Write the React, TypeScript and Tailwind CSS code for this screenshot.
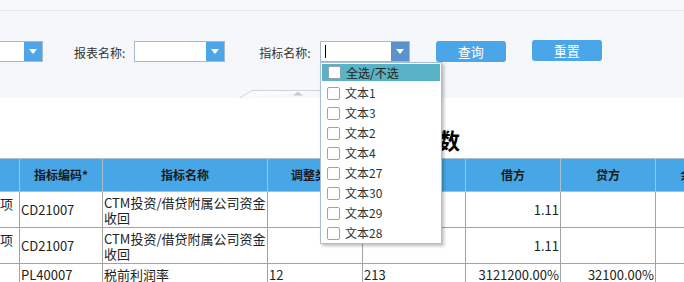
const font = { fontFamily: '"Noto Sans CJK SC", "Noto Sans", sans-serif' }

interface SelectProps {
    className?: string
    active?: boolean
    cursor?: boolean
}

const Select = ({ className, active, cursor }: SelectProps) => {
    return (
        <div className={`flex h-[21px] border border-[#a9b9ca] bg-white ${className}`}>
            <div className="flex-1 flex items-center pl-[4px]">
                {cursor && <span className="w-px h-[13px] bg-black" />}
            </div>
            <div className={`w-[18px] h-full flex items-center justify-center ${active ? 'bg-[#5a93cc]' : 'bg-[#4ea6e6]'}`}>
                <svg width="8" height="5" viewBox="0 0 8 5"><path d="M0 0h8L4 5z" fill="#fff" /></svg>
            </div>
        </div>
    )
}

const items = ['文本1', '文本3', '文本2', '文本4', '文本27', '文本30', '文本29', '文本28']

const Check = () => <span className="w-[13px] h-[13px] border border-[#9aa3ad] rounded-[2px] bg-white shrink-0" />

const Dropdown = () => {
    return (
        <div className="absolute left-[320px] top-[62px] w-[122px] h-[182px] bg-white border border-[#a7c0d8] shadow-[2px_2px_3px_rgba(0,0,0,0.25)] pt-px">
            <div className="h-[17px] mx-px bg-[#5ab2c6] flex items-center gap-[5px] pl-[6px] text-[12px] text-[#222] mb-[2px]">
                <Check />
                <span>全选/不选</span>
            </div>
            {items.map((t) => (
                <div key={t} className="h-[20px] flex items-center gap-[5px] pl-[6px] text-[12px] text-[#333]">
                    <Check />
                    <span>{t}</span>
                </div>
            ))}
        </div>
    )
}

const cols = [73, 83, 165, 95, 103, 95, 95, 74]
const headers = ['', '指标编码*', '指标名称', '调整类型', '', '借方', '贷方', '余额']

const rows = [
    ['收支调整项目', 'CD21007', 'CTM投资/借贷附属公司资金收回', '', '', '1.11', '', ''],
    ['收支调整项目', 'CD21007', 'CTM投资/借贷附属公司资金收回', '', '', '1.11', '', ''],
    ['', 'PL40007', '税前利润率', '12', '213', '3121200.00%', '32100.00%', ''],
]

const DataTable = () => {
    return (
        <table className="table-fixed border-collapse ml-[-54px] text-[13px] text-[#222]" style={{ width: 783 }}>
            <colgroup>
                {cols.map((w, i) => <col key={i} style={{ width: w }} />)}
            </colgroup>
            <thead>
                <tr className="h-[33px] bg-[#46a6e6]">
                    {headers.map((h, i) => (
                        <th key={i} className="border border-[#a9bfd2] text-[12px] font-bold text-[#1a1a1a] text-center whitespace-nowrap">{h}</th>
                    ))}
                </tr>
            </thead>
            <tbody>
                {rows.map((r, ri) => (
                    <tr key={ri} className={ri < 2 ? 'h-[36px]' : 'h-[20px]'}>
                        {r.map((c, ci) => (
                            <td key={ci} className={`border border-[#a3a3a3] px-[1px] leading-[15px] overflow-hidden ${ci >= 5 && ci <= 6 ? 'text-right' : 'text-left'} ${ri === 2 ? 'align-top pt-[3px]' : ci === 0 ? 'align-top pt-[4px]' : 'align-middle'}`}>
                                {c}
                            </td>
                        ))}
                    </tr>
                ))}
            </tbody>
        </table>
    )
}

export default function App() {
    return (
        <div className="w-[684px] h-[282px] overflow-hidden relative bg-white" style={font}>
            <div className="h-[11px] bg-[#f7f8fa] border-b border-[#e3e6ea]" />
            <div className="h-[87px] bg-[#f5f7fa] relative">
                <div className="flex items-start pt-[30px] text-[12px] text-[#333]">
                    <Select className="w-[93px] ml-[-50px]" />
                    <span className="ml-[31px] mt-[3px]">报表名称:</span>
                    <Select className="w-[91px] ml-[9px]" />
                    <span className="ml-[34px] mt-[3px]">指标名称:</span>
                    <Select className="w-[90px] ml-[9px]" active cursor />
                    <button className="ml-[26px] w-[70px] h-[21px] rounded-[3px] bg-[#4aa6e8] text-white text-[13px]">查询</button>
                    <button className="ml-[26px] mt-[-1px] w-[70px] h-[21px] rounded-[3px] bg-[#4aa6e8] text-white text-[13px]">重置</button>
                </div>
                <svg className="absolute left-[239px] bottom-0" width="84" height="9" viewBox="0 0 84 9">
                    <path d="M0.5 9L13.5 1.5H84" fill="#fafbfc" stroke="#cfd4da" />
                    <path d="M54 6.5h10l-5-4z" fill="#c6cbd1" />
                </svg>
            </div>
            <div className="h-[60px] flex items-end pb-[7px]">
                <div className="w-[460px] text-right text-[22px] font-bold text-black leading-[24px]">数</div>
            </div>
            <DataTable />
            <Dropdown />
        </div>
    )
}
